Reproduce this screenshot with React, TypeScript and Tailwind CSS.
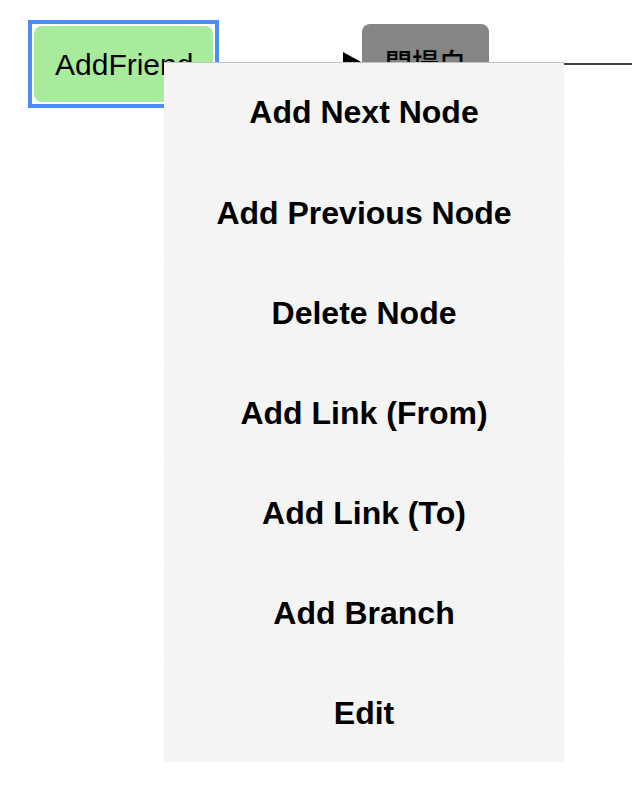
import React from "react";

const menuItems = [
  "Add Next Node",
  "Add Previous Node",
  "Delete Node",
  "Add Link (From)",
  "Add Link (To)",
  "Add Branch",
  "Edit",
];

function Links() {
  return (
    <svg className="absolute left-0 top-0" width={632} height={810}>
      <line x1={219} y1={64} x2={362} y2={64} stroke="#000" strokeWidth={1.5} />
      <polygon points="343,52 363,63 343,74" fill="#000" />
      <line x1={489} y1={64} x2={632} y2={64} stroke="#000" strokeWidth={1.5} />
    </svg>
  );
}

function ContextMenu() {
  return (
    <div className="absolute left-[164px] top-[62px] flex w-[400px] flex-col bg-[#f4f4f4] shadow-[inset_0_1px_0_#c2c2c2]">
      {menuItems.map((item, i) => (
        <div
          key={item}
          className={
            i === 0
              ? "flex h-[100px] items-center justify-center text-[32px] font-bold text-black"
              : "flex h-[100px] items-center justify-center border-t border-[#f8f8f8] text-[32px] font-bold text-black"
          }
        >
          {item}
        </div>
      ))}
    </div>
  );
}

export default function App() {
  return (
    <div
      className="relative h-[810px] w-[632px] overflow-hidden bg-white"
      style={{ fontFamily: '"Liberation Sans", Arial, "Noto Sans CJK TC", sans-serif' }}
    >
      <Links />

      {/* selected node */}
      <div className="absolute left-[28px] top-[20px] h-[88px] w-[191px] border-4 border-[#4c8ef7] bg-white p-[2px]">
        <div className="flex h-full w-full items-center rounded-[8px] bg-[#a8eb9c] pl-[21px] text-[30px] text-black">
          AddFriend
        </div>
      </div>

      {/* next node */}
      <div
        className="absolute left-[362px] top-[24px] flex h-[76px] w-[127px] items-center justify-center rounded-[8px] bg-[#858585] text-[27px] font-medium text-black"
        style={{ fontFamily: '"Noto Sans CJK TC", sans-serif' }}
      >
        開場白
      </div>

      <ContextMenu />
    </div>
  );
}
